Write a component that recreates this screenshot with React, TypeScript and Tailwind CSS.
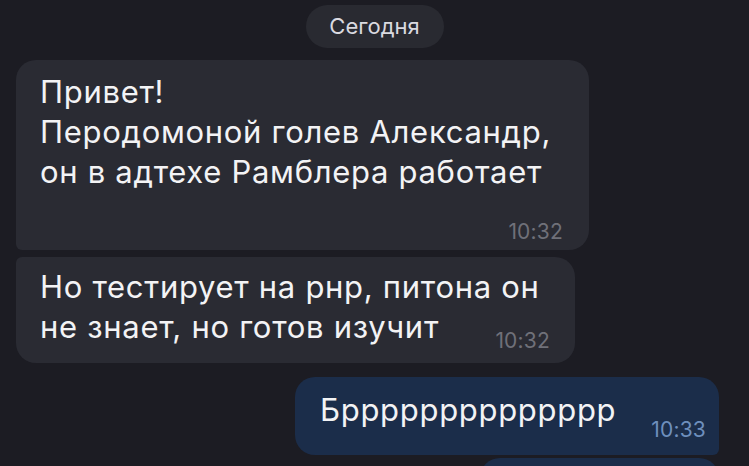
const font = { fontFamily: "Inter, 'Noto Sans', sans-serif" };

const Time = ({ value, blue }: { value: string; blue?: boolean }) => (
  <span
    className={`shrink-0 text-[21px] leading-none tracking-[0.2px] ${blue ? "text-[#6e8fbd]" : "text-[#6f7079]"}`}
  >
    {value}
  </span>
);

const msgText = "text-[31px] leading-[40px] tracking-[0.7px] whitespace-nowrap text-[#f3f3f5]";

export default function App() {
  return (
    <div
      className="flex h-[466px] w-[749px] flex-col overflow-hidden bg-[#1c1c23] text-white"
      style={font}
    >
      {/* date pill */}
      <div className="flex shrink-0 justify-center pt-[5px]">
        <div className="flex h-[43px] w-[138px] items-center justify-center rounded-full bg-[#292a31] text-[22px] text-[#dadae0]">
          Сегодня
        </div>
      </div>

      {/* incoming 1 */}
      <div className="mt-[12px] ml-[16px] flex h-[190px] w-[573px] shrink-0 flex-col rounded-[20px] rounded-bl-[6px] bg-[#2a2b33] pt-[12px] pr-[26px] pb-[8px] pl-[24px]">
        <p className={msgText}>
          Привет!
          <br />
          Перодомоной голев Александр,
          <br />
          он в адтехе Рамблера работает
        </p>
        <div className="mt-auto flex justify-end">
          <Time value="10:32" />
        </div>
      </div>

      {/* incoming 2 */}
      <div className="mt-[7px] ml-[16px] flex h-[106px] w-[559px] shrink-0 flex-col rounded-[20px] rounded-tl-[6px] bg-[#2a2b33] pt-[10px] pr-[25px] pl-[24px]">
        <p className={msgText}>Но тестирует на рнр, питона он</p>
        <div className="flex items-end justify-between">
          <p className={msgText}>не знает, но готов изучит</p>
          <div className="translate-y-[7px]">
            <Time value="10:32" />
          </div>
        </div>
      </div>

      {/* outgoing */}
      <div className="mt-[14px] mr-[30px] flex h-[78px] w-[424px] shrink-0 items-start justify-between self-end rounded-[20px] rounded-br-[6px] bg-[#1b2d4a] pt-[13px] pr-[13px] pl-[25px]">
        <p className={msgText}>Брррррррррррррр</p>
        <div className="pt-[29px]">
          <Time value="10:33" blue />
        </div>
      </div>

      {/* next outgoing, cut off */}
      <div className="mt-[3px] mr-[30px] h-[40px] w-[239px] shrink-0 self-end rounded-[20px] bg-[#1b2d4a]" />
    </div>
  );
}
